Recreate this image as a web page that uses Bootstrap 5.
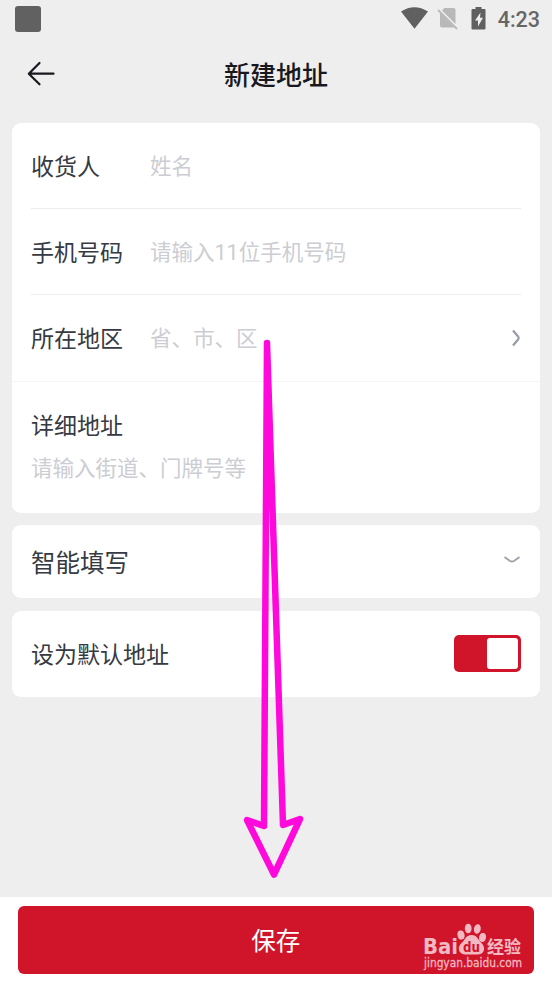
<!DOCTYPE html>
<html lang="zh-CN">
<head>
<meta charset="utf-8">
<meta name="viewport" content="width=device-width, initial-scale=1">
<title>新建地址</title>
<link href="https://cdn.jsdelivr.net/npm/bootstrap@5.3.0/dist/css/bootstrap.min.css" rel="stylesheet">
<style>
  body { font-family: Roboto, "Noto Sans CJK SC", sans-serif; background: #eee; color: #363a42; line-height: 1; }
  .screen { width: 552px; height: 983px; overflow: hidden; }
  .status-bar { height: 38px; padding: 0 12px 0 15px; color: #5f5f5f; }
  .status-app { width: 26px; height: 26px; border-radius: 3px; background: #616161; margin-top: -1px; }
  .clock { font-size: 21.5px; font-weight: 500; color: #666; margin-left: 11px; padding-top: 1px; }
  .title-bar { height: 85px; padding: 0 26px 13px; color: #18191f; }
  .title-bar h1 { font-size: 26px; font-weight: 500; line-height: 36px; padding-top: 3px; }
  .title-bar .side { width: 30px; }
  .panels { padding: 0 12px; gap: 12.5px; }
  .panel { border: 0; border-radius: 9px; background: #fff; }
  .field { height: 86px; margin: 0 19px; border-bottom: 1px solid #ededed; }
  .field-region { height: 86.5px; margin: 0; padding: 0 19px; border-color: #f5f5f5; }
  .field-label { font-size: 23px; width: 119px; white-space: nowrap; }
  .hint { font-size: 21.5px; color: #cccdd3; white-space: nowrap; }
  .field .field-label { padding-top: 3px; }
  .field .hint { padding-top: 2px; }
  .detail { height: 131px; padding: 33px 19px 0; }
  .detail .hint { margin-top: 20px; }
  .smart { height: 73px; padding: 0 19px; font-size: 24.5px; }
  .smart span { padding-top: 5px; }
  .default-row { height: 86px; padding: 0 19px; font-size: 23px; }
  .default-row > span { padding-top: 4px; }
  .toggle { width: 67px; height: 37px; border-radius: 5px; background: #d0142a; padding: 3px; margin-bottom: 1px; }
  .toggle span { width: 31px; height: 31px; border-radius: 3px; background: #fff; }
  .save-bar { height: 86px; background: #fff; padding: 9px 18.5px 9px 18px; }
  .save-btn, .save-btn:hover { height: 68px; border: 0; border-radius: 6px; background: #d0142a; color: #fff; font-size: 24.5px; line-height: 1; }
  .save-btn span { display: block; padding-top: 5px; }
  .overlay-arrow { left: 0; top: 0; pointer-events: none; }
  .watermark { left: 420px; top: 918px; pointer-events: none; }
</style>
<script src="https://cdn.jsdelivr.net/npm/bootstrap@5.3.0/dist/js/bootstrap.bundle.min.js"></script>
</head>
<body>
<div class="screen d-flex flex-column position-relative">
  <div class="status-bar d-flex align-items-center justify-content-between">
    <div class="status-app"></div>
    <div class="d-flex align-items-center">
      <svg width="87" height="38" viewBox="0 0 87 38">
        <path d="M1 11.500Q14.500 2.800 28 11.500L14.500 28.800Z" fill="#606060"/>
        <path d="M44.500 8H53.500Q55.500 8 55.500 10V24L42 10.500ZM40 13L54.500 27.500H42Q40 27.500 40 25.500Z" fill="#b8b8b8"/>
        <path d="M38 10L57 29" stroke="#b8b8b8" stroke-width="1.800"/>
        <path d="M75.500 7h6v2h3q1 0 1 1v18.500q0 1-1 1h-12q-1 0-1-1V10q0-1 1-1h3z" fill="#606060"/>
        <path d="M80.500 12.500L75 20.500H78V26.500L83 17.800H80Z" fill="#eee"/>
      </svg>
      <span class="clock">4:23</span>
    </div>
  </div>
  <header class="title-bar d-flex align-items-center justify-content-between">
    <svg class="side" width="30" height="28" viewBox="0 0 30 28" fill="none" stroke="#18191f" stroke-width="2.200" stroke-linecap="round" stroke-linejoin="round"><path d="M13.500 3L2.800 13.700L13.500 24.300M3 13.700H27.500"/></svg>
    <h1 class="m-0">新建地址</h1>
    <span class="side"></span>
  </header>
  <main class="panels d-flex flex-column flex-grow-1">
    <section class="card panel">
      <div class="field d-flex align-items-center"><span class="field-label">收货人</span><span class="hint">姓名</span></div>
      <div class="field d-flex align-items-center"><span class="field-label">手机号码</span><span class="hint">请输入11位手机号码</span></div>
      <div class="field field-region d-flex align-items-center"><span class="field-label">所在地区</span><span class="hint">省、市、区</span>
        <svg class="ms-auto" width="10" height="18" viewBox="0 0 10 18" fill="none" stroke="#989bab" stroke-width="2.200"><path d="M2 1.500L7.300 7.800Q8.200 9 7.300 10.200L2 16.500"/></svg>
      </div>
      <div class="detail d-flex flex-column"><span class="field-label">详细地址</span><span class="hint">请输入街道、门牌号等</span></div>
    </section>
    <section class="card panel smart flex-row align-items-center justify-content-between">
      <span>智能填写</span>
      <svg width="18" height="14" viewBox="0 0 18 14" fill="none" stroke="#a0a5b0" stroke-width="2"><path d="M1.500 2L7 6Q9 7.200 11 6L16.500 2"/></svg>
    </section>
    <section class="card panel default-row flex-row align-items-center justify-content-between">
      <span>设为默认地址</span>
      <div class="toggle d-flex justify-content-end"><span></span></div>
    </section>
  </main>
  <footer class="save-bar"><button type="button" class="btn save-btn w-100 p-0"><span>保存</span></button></footer>

  <svg class="overlay-arrow position-absolute" width="552" height="983" viewBox="0 0 552 983" fill="none" stroke="#ff08dc" stroke-width="6.500" stroke-linejoin="round">
    <path d="M267 343L264 826L247 820L274 874.500L300 819L283 825Z"/>
  </svg>
  <svg class="watermark position-absolute" width="110" height="60" viewBox="0 0 110 60" fill="#f3b9c3">
    <text x="3" y="35.500" font-family="DejaVu Sans, sans-serif" font-size="21" font-weight="700" textLength="35" lengthAdjust="spacingAndGlyphs">Bai</text>
    <ellipse cx="41" cy="17" rx="3.500" ry="4.600" transform="rotate(-12 41 17)"/>
    <ellipse cx="48.200" cy="10.500" rx="3.400" ry="4.800"/>
    <ellipse cx="57.300" cy="11" rx="3.400" ry="4.800" transform="rotate(12 57.300 11)"/>
    <ellipse cx="62.500" cy="19.500" rx="3.400" ry="4.500" transform="rotate(12 62.500 19.500)"/>
    <path d="M51.500 17C45.500 17 45 22.500 41.500 25C36 30 39.500 36.500 45.500 36.500H57.500C64 36.500 66.500 30 61.500 25C58 22 57.500 17 51.500 17Z"/>
    <text x="43" y="34" fill="#d0142a" font-family="DejaVu Sans, sans-serif" font-size="14" font-weight="700" textLength="17" lengthAdjust="spacingAndGlyphs">du</text>
    <text x="67" y="34.500" font-family="Noto Sans CJK SC, sans-serif" font-size="17" font-weight="700" textLength="34" lengthAdjust="spacingAndGlyphs">经验</text>
    <text x="4" y="49" font-family="DejaVu Sans, sans-serif" font-size="11.500" stroke="#f3b9c3" stroke-width=".3" textLength="98" lengthAdjust="spacingAndGlyphs">jingyan.baidu.com</text>
  </svg>
</div>
</body>
</html>
